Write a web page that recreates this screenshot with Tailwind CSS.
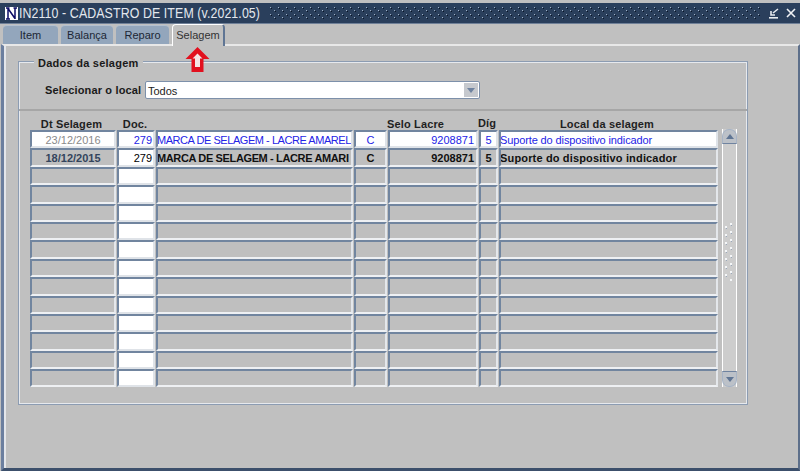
<!DOCTYPE html>
<html lang="en">
<head>
  <meta charset="UTF-8">
  <title>IN2110 - Cadastro de Item</title>
  <script src="https://cdn.jsdelivr.net/npm/@tailwindcss/browser@4"></script>
</head>
<body class="m-0 overflow-hidden">
  <div class="relative w-[800px] h-[471px] flex flex-col bg-[#c0c0c0] pt-[3px] font-['Liberation_Sans',Arial,sans-serif] text-[11px] text-black">

    <!-- Title bar -->
    <div class="h-[21px] shrink-0 flex items-center bg-[#2a3f5c] pl-[5px] pr-[3px] border-b border-[#6f8098]">
      <div class="w-[13px] h-[13px] bg-white flex items-center justify-center">
        <svg width="13" height="13" viewBox="0 0 13 13">
          <path d="M1 1h3.5M3 1v11M1 12h4M3 1.5 10 11.5M10 1v11M8.5 1H12" stroke="#0c0c66" stroke-width="1.5" fill="none"/>
        </svg>
      </div>
      <div class="w-[243px] ml-[1px]">
        <span class="block origin-left scale-x-[0.885] text-[14px] tracking-[0.1px] text-[#e4e8ee] whitespace-nowrap">IN2110 - CADASTRO DE ITEM (v.2021.05)</span>
      </div>
      <svg class="ml-[7px] flex-1 h-[14px]" height="14">
        <defs>
          <pattern id="titleDots" width="8" height="7" patternUnits="userSpaceOnUse">
            <rect x="1" y="1" width="1" height="1" fill="#9fb0c6"/><rect x="2" y="2" width="1" height="1" fill="#0c1626"/>
            <rect x="5" y="4" width="1" height="1" fill="#9fb0c6"/><rect x="6" y="5" width="1" height="1" fill="#0c1626"/>
          </pattern>
        </defs>
        <rect width="100%" height="14" fill="url(#titleDots)"/>
      </svg>
      <svg class="ml-[8px]" width="12" height="12" viewBox="0 0 12 12"><path d="M10 2 5 6M3 4v4h4" stroke="#e8ecf0" stroke-width="1.6" fill="none"/><rect x="1" y="10" width="9" height="1.6" fill="#e8ecf0"/></svg>
      <svg class="ml-[5px]" width="12" height="12" viewBox="0 0 12 12"><path d="M2 2l8 8M10 2l-8 8" stroke="#f0f2f5" stroke-width="1.6" fill="none"/></svg>
    </div>

    <!-- Tabs -->
    <div class="h-[20px] shrink-0 flex items-end pl-[3px] gap-[3px]">
      <div class="w-[55px] h-[19px] flex items-center justify-center bg-[#93a6bc] rounded-t-[4px] border-t border-[#b4c0cf] text-[#1c2635]">Item</div>
      <div class="w-[52px] h-[19px] flex items-center justify-center bg-[#93a6bc] rounded-t-[4px] border-t border-[#b4c0cf] text-[#1c2635]">Balança</div>
      <div class="w-[53px] h-[19px] flex items-center justify-center bg-[#93a6bc] rounded-t-[4px] border-t border-[#b4c0cf] text-[#1c2635]">Reparo</div>
      <div class="relative z-10 -mb-[2px] w-[53px] h-[22px] pb-[1px] flex items-center justify-center bg-[#c0c0c0] rounded-t-[4px] border-t border-l border-white border-r-2 border-r-[#5f7594] text-[#333]">Selagem</div>
    </div>

    <!-- Canvas -->
    <div class="flex-1 ml-[1px] border-t-2 border-t-[#e8e8e8] border-l-[3px] border-l-[#6c7f9f] border-r-2 border-r-[#5d6f8a] border-b-[3px] border-b-[#3c4f6b] shadow-[inset_2px_0_0_#e4e6ea] pl-[14px] pt-[15px] pr-[50px] pb-[63px]">
      <!-- Group box -->
      <div class="relative h-full border border-[#8c9cb2] shadow-[inset_0_0_0_1px_#e6e9ee]">
        <div class="absolute left-[15px] -top-[7px] px-[4px] bg-[#c0c0c0] font-bold text-[#1a1a1a] tracking-[0.25px]">Dados da selagem</div>

        <div class="h-[49px] flex items-center pl-[26px] pt-[9px] border-b-2 border-b-[#a6a6a6]">
          <span class="w-[100px] font-bold tracking-[0.15px] text-[#1a1a1a] whitespace-nowrap">Selecionar o local</span>
          <div class="w-[335px] h-[18px] flex bg-white border border-[#7d90aa] rounded-[2px]">
            <span class="flex-1 pl-[2px] pt-[1px] leading-[16px] text-[#222]">Todos</span>
            <div class="w-[14px] m-[1px] bg-[#c6c9ce] flex items-center justify-center">
              <div class="w-0 h-0 border-l-[4px] border-r-[4px] border-t-[5px] border-l-transparent border-r-transparent border-t-[#6f83a0]"></div>
            </div>
          </div>
        </div>

        <!-- Block -->
        <div class="flex pl-[11px] pt-[2px]">
          <div class="w-[689px] shrink-0">
            <div class="h-[17px] pt-[3px] flex font-bold tracking-[0.15px] text-[#1f1f1f]">
              <div class="w-[83px] text-center">Dt Selagem</div>
              <div class="w-[44px] text-center">Doc.</div>
              <div class="w-[230px]"></div>
              <div class="w-[91px] text-left">Selo Lacre</div>
              <div class="w-[18px] text-center -mt-[1px]">Díg</div>
              <div class="w-[222px] text-center">Local da selagem</div>
            </div>
            <div id="rows"></div>
          </div>
          <!-- Scrollbar -->
          <div class="relative ml-[3px] mt-[16px] w-[15px] h-[258px] bg-[#cdcdcd] border-x border-white flex flex-col justify-between">
            <div class="h-[15px] -mx-px bg-[#bcc1c8] rounded-t-[7px] border border-[#a7b4c6] border-b-[#6f83a0] flex items-center justify-center">
              <div class="w-0 h-0 border-l-[4px] border-r-[4px] border-b-[5px] border-l-transparent border-r-transparent border-b-[#5f7594]"></div>
            </div>
            <svg class="absolute left-[2px] top-[94px]" width="9" height="58">
              <defs>
                <pattern id="gripDots" width="9" height="8" patternUnits="userSpaceOnUse">
                  <rect x="0" y="3" width="2" height="2" fill="#f4f6f8"/><rect x="5" y="0" width="2" height="2" fill="#f4f6f8"/>
                  <rect x="1" y="5" width="1" height="1" fill="#9aa8ba"/><rect x="6" y="2" width="1" height="1" fill="#9aa8ba"/>
                </pattern>
              </defs>
              <rect width="9" height="58" fill="url(#gripDots)"/>
            </svg>
            <div class="h-[16px] -mx-px bg-[#bcc1c8] rounded-b-[7px] border border-[#a7b4c6] border-t-[#6f83a0] flex items-center justify-center">
              <div class="w-0 h-0 border-l-[4px] border-r-[4px] border-t-[5px] border-l-transparent border-r-transparent border-t-[#5f7594]"></div>
            </div>
          </div>
        </div>
      </div>
    </div>

    <!-- Red arrow annotation -->
    <svg class="absolute left-[185px] top-[47px] z-20" width="25" height="25" viewBox="0 0 24 25">
      <path d="M12 0 24 12h-6v13H6V12H0z" fill="#e2101e"/>
      <path d="M12 6.5 17 11.5h-2.5V20h-5v-8.5H7z" fill="#f3e4e4"/>
    </svg>
  </div>

  <script>
    // Cell look: sunken for the empty/disabled fields, white for the enterable ones
    const grey = 'bg-[#bfbfbf] border-2 border-t-[#71859f] border-l-[#71859f] border-r-[#e4e7eb] border-b-[#eef0f3]';
    const white = 'bg-white border-2 border-t-[#71859f] border-l-[#71859f] border-r-[#dfe3e8] border-b-[#dfe3e8]';
    const widths = ['w-[86px]', 'w-[38px]', 'w-[197px]', 'w-[33px]', 'w-[90px]', 'w-[19px]', 'w-[219px]'];
    const aligns = ['justify-center', 'justify-end pr-[1px]', 'justify-start indent-[-1px]', 'justify-center', 'justify-end pr-[2px]', 'justify-center', 'justify-start indent-[-1px]'];

    const current = ['23/12/2016', '279', 'MARCA DE SELAGEM - LACRE AMAREL', 'C', '9208871', '5', 'Suporte do dispositivo indicador'];
    const previous = ['18/12/2015', '279', 'MARCA DE SELAGEM - LACRE AMARI', 'C', '9208871', '5', 'Suporte do dispositivo indicador'];
    const currentTracking = ['', '', 'tracking-[-0.45px]', '', '', '', 'tracking-[-0.12px]'];
    const previousTracking = ['', '', 'tracking-[-0.37px]', '', '', '', 'tracking-[0.16px]'];

    function cell(col, text, cls, textCls) {
      return `<div class="${widths[col]} shrink-0 h-[18.4px] ${cls} mr-[1px] pt-[2px] flex items-center overflow-hidden whitespace-nowrap ${aligns[col]} ${textCls}">${text}</div>`;
    }

    let html = '';
    for (let r = 0; r < 14; r++) {
      html += '<div class="flex">';
      for (let c = 0; c < 7; c++) {
        if (r === 0) {
          const color = c === 0 ? 'text-[#8a8a8a]' : 'text-[#2323e6]';
          html += cell(c, current[c], white, color + ' ' + currentTracking[c]);
        } else if (r === 1) {
          const color = c === 0 ? 'text-[#33445c]' : 'text-[#111]';
          html += cell(c, previous[c], c === 1 ? white : grey, c === 1 ? 'text-black' : 'font-bold ' + color + ' ' + previousTracking[c]);
        } else {
          html += cell(c, '', c === 1 ? white : grey, '');
        }
      }
      html += '</div>';
    }
    document.getElementById('rows').innerHTML = html;
  </script>
</body>
</html>
